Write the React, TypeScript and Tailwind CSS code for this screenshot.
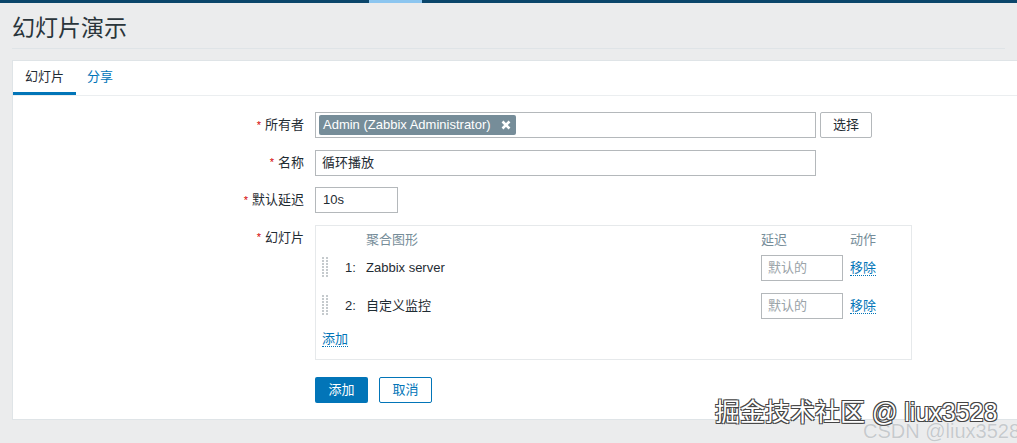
import React from 'react';

function DragHandle() {
  const dots = [];
  for (let r = 0; r < 7; r++) {
    for (let c = 0; c < 2; c++) {
      dots.push(<rect key={`${r}-${c}`} x={c * 4} y={r * 3} width="2" height="2" fill="#c5cacd" />);
    }
  }
  return (
    <svg width="7" height="21" viewBox="0 0 7 21">
      {dots}
    </svg>
  );
}

function Label({ text }: { text: string }) {
  return (
    <div className="flex h-[26px] w-[291px] shrink-0 items-center justify-end text-[13px] text-[#1f2c33]">
      <span className="mr-[4px] text-[11px] text-[#d40000]">*</span>
      {text}
    </div>
  );
}

function SlideRow({ n, name }: { n: number; name: string }) {
  return (
    <div className="flex h-[26px] items-center text-[13px] text-[#1f2c33]">
      <DragHandle />
      <div className="w-[37px] pl-[16px]">{n}:</div>
      <div className="w-[395px]">{name}</div>
      <div className="flex h-[26px] w-[82px] items-center border border-[#b4b8bb] px-[6px] text-[#9aa3a8]">
        默认的
      </div>
      <a className="ml-[7px] border-b border-dotted border-[#0275b8] leading-[15px] text-[#0275b8]">移除</a>
    </div>
  );
}

export default function App() {
  return (
    <div className="relative h-[443px] w-full overflow-hidden bg-[#ebeced] font-['Liberation_Sans','Noto_Sans_CJK_SC',sans-serif]">
      <div className="flex h-[3px] bg-[#0b466b]">
        <div className="ml-[369px] h-full w-[53px] bg-[#8cc6f0]" />
      </div>

      <div className="mx-3 border-b border-[#dfe4e7] pb-[5px] pt-[10px]">
        <h1 className="text-[23px] leading-[30px] text-[#2a353b]">幻灯片演示</h1>
      </div>

      <div className="ml-3 mt-[11px] border-b border-l border-t border-[#dfe4e7] bg-white">
        <div className="flex h-[35px] border-b border-[#ebeef0] text-[13px]">
          <div className="flex items-center border-b-[3px] border-[#0275b8] px-3 text-[#1f2c33]">幻灯片</div>
          <div className="flex items-center px-[11px] pb-[3px] text-[#0275b8]">分享</div>
        </div>

        <div className="flex flex-col gap-[11.5px] pb-4 pt-4">
          <div className="flex gap-[11px]">
            <Label text="所有者" />
            <div className="flex h-[26px] w-[501px] items-center border border-[#b4b8bb] px-[3px]">
              <div className="flex h-[20px] items-center gap-[10px] rounded-[2px] bg-[#768d99] pl-[4px] pr-[5px] text-[13px] text-white">
                Admin (Zabbix Administrator)
                <svg width="10" height="10" viewBox="0 0 10 10">
                  <path d="M1.5 1.5 L8.5 8.5 M8.5 1.5 L1.5 8.5" stroke="white" strokeWidth="2.6" />
                </svg>
              </div>
            </div>
            <button className="-ml-[7px] flex h-[26px] w-[52px] items-center justify-center rounded-[2px] border border-[#b4b8bb] bg-white text-[13px] text-[#1f2c33]">
              选择
            </button>
          </div>

          <div className="flex gap-[11px]">
            <Label text="名称" />
            <div className="flex h-[26px] w-[501px] items-center border border-[#b4b8bb] px-[6px] text-[13px] text-[#1f2c33]">
              循环播放
            </div>
          </div>

          <div className="flex gap-[11px]">
            <Label text="默认延迟" />
            <div className="flex h-[26px] w-[83px] items-center border border-[#b4b8bb] px-[7px] text-[13px] text-[#1f2c33]">
              10s
            </div>
          </div>

          <div className="flex gap-[11px]">
            <Label text="幻灯片" />
            <div className="w-[597px] border border-[#e6e9eb] pb-[11px] pl-[6px] pt-[4px]">
              <div className="flex h-[20px] items-center text-[13px] text-[#768d99]">
                <div className="w-[44px]" />
                <div className="w-[395px]">聚合图形</div>
                <div className="w-[89px]">延迟</div>
                <div>动作</div>
              </div>
              <div className="mt-[5px] flex flex-col gap-[12px]">
                <SlideRow n={1} name="Zabbix server" />
                <SlideRow n={2} name="自定义监控" />
              </div>
              <div className="mt-[11px] flex h-[18px] items-center text-[13px]">
                <a className="border-b border-dotted border-[#0275b8] leading-[15px] text-[#0275b8]">添加</a>
              </div>
            </div>
          </div>

          <div className="mt-[5.5px] flex gap-[11px]">
            <div className="w-[291px] shrink-0" />
            <button className="flex h-[26px] w-[53px] items-center justify-center rounded-[2px] bg-[#0275b8] text-[13px] text-white">
              添加
            </button>
            <button className="flex h-[26px] w-[53px] items-center justify-center rounded-[2px] border border-[#0275b8] bg-white text-[13px] text-[#0275b8]">
              取消
            </button>
          </div>
        </div>
      </div>

      <div className="absolute left-[863px] top-[416px] whitespace-nowrap text-[20px] text-[#c6cacd] [text-shadow:0_0_1px_#ffffff]">
        CSDN @liux3528
      </div>
      <div className="absolute left-[715px] top-[396px] whitespace-nowrap text-[25px] leading-[32px] text-white [text-shadow:1px_1px_0_#444,-1px_-1px_0_#444,1px_-1px_0_#444,-1px_1px_0_#444]">
        掘金技术社区 @ liux3528
      </div>
    </div>
  );
}
